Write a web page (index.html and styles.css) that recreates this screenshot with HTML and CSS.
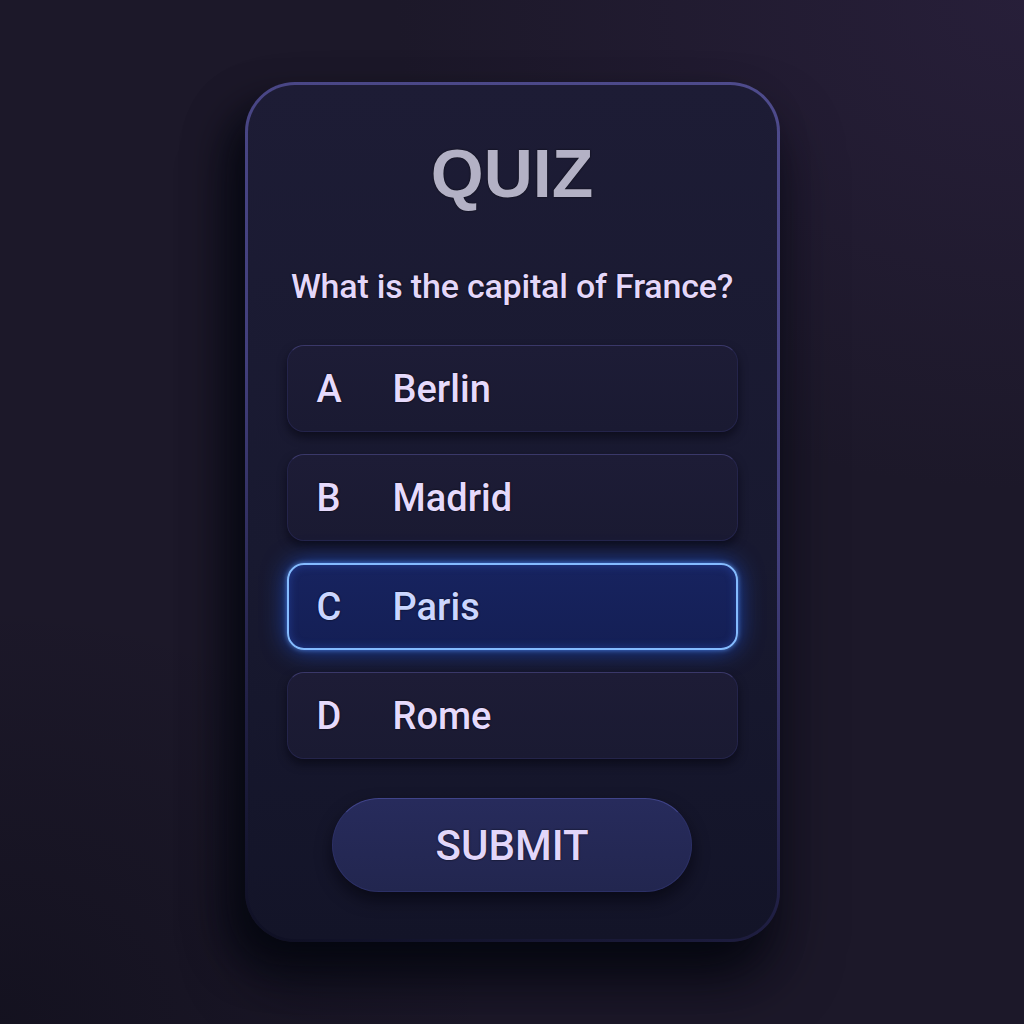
FILE: index.html
```html
<!DOCTYPE html>
<html lang="en">
<head>
<meta charset="utf-8">
<title>Quiz</title>
<link rel="stylesheet" href="styles.css">
</head>
<body>
<main class="card">
  <h1 class="title">QUIZ</h1>
  <p class="question">What is the capital of France?</p>
  <ul class="options">
    <li class="option"><span class="letter">A</span><span class="answer">Berlin</span></li>
    <li class="option"><span class="letter">B</span><span class="answer">Madrid</span></li>
    <li class="option selected"><span class="letter">C</span><span class="answer">Paris</span></li>
    <li class="option"><span class="letter">D</span><span class="answer">Rome</span></li>
  </ul>
  <button class="submit" type="button">SUBMIT</button>
</main>
</body>
</html>
```
FILE: styles.css
```css
html, body {
  margin: 0;
  padding: 0;
}
body {
  width: 1024px;
  height: 1024px;
  display: flex;
  align-items: center;
  justify-content: center;
  font-family: Roboto, "Liberation Sans", Arial, sans-serif;
  background:
    radial-gradient(ellipse 900px 700px at 100% 0%, rgba(48, 36, 70, 0.55), rgba(48, 36, 70, 0) 70%),
    radial-gradient(ellipse 700px 600px at 0% 100%, rgba(10, 10, 20, 0.45), rgba(10, 10, 20, 0) 70%),
    #1c1829;
  overflow: hidden;
}
.card {
  box-sizing: border-box;
  width: 535px;
  height: 860px;
  padding: 54px 0 47px;
  display: flex;
  flex-direction: column;
  align-items: center;
  border-radius: 50px;
  border: 3px solid transparent;
  background:
    linear-gradient(180deg, #1d1c35 0%, #181930 55%, #131428 100%) padding-box,
    linear-gradient(200deg, #4e4b8c 0%, #423f7c 45%, #23224a 75%, #0e0f22 100%) border-box;
  box-shadow: -18px 24px 40px rgba(3, 5, 14, 0.75), 0 40px 60px rgba(3, 5, 14, 0.55);
}
.title {
  margin: 0;
  font-family: "Liberation Sans", Arial, sans-serif;
  font-size: 68px;
  line-height: 68px;
  font-weight: 700;
  color: #b3b1c5;
  text-shadow: 0 0 2px rgba(0, 0, 0, 0.8);
}
.question {
  margin: 62px 0 0;
  font-size: 34px;
  line-height: 34px;
  font-weight: 500;
  color: #e4d7fa;
  letter-spacing: -0.2px;
  text-shadow: 0 0 2px rgba(0, 0, 0, 0.9);
}
.options {
  list-style: none;
  margin: 42px 0 0;
  padding: 0;
  display: flex;
  flex-direction: column;
  gap: 22px;
  width: 451px;
}
.option {
  box-sizing: border-box;
  height: 87px;
  display: flex;
  align-items: center;
  padding-left: 29px;
  border-radius: 17px;
  border: 1px solid #24244a;
  border-top-color: #3a3869;
  background: linear-gradient(180deg, #1d1c36 0%, #1a1a32 100%);
  box-shadow: 0 5px 10px rgba(3, 4, 12, 0.55);
  color: #e6dafc;
}
.letter {
  width: 76px;
  font-size: 38px;
  line-height: 38px;
  font-weight: 500;
  text-shadow: 0 0 2px rgba(0, 0, 0, 0.9);
}
.answer {
  font-size: 38px;
  line-height: 38px;
  font-weight: 500;
  text-shadow: 0 0 2px rgba(0, 0, 0, 0.9);
}
.option.selected {
  border: 2px solid #84bbff;
  padding-left: 28px;
  background: linear-gradient(180deg, #17235f 0%, #141f55 100%);
  box-shadow: 0 0 24px rgba(30, 95, 255, 0.6), 0 0 5px rgba(120, 180, 255, 0.7), inset 0 0 10px rgba(60, 110, 240, 0.35);
  color: #cbd6ff;
}
.submit {
  box-sizing: border-box;
  margin-top: 39px;
  width: 360px;
  height: 94px;
  border-radius: 47px;
  border: 1px solid #2c3066;
  border-top-color: #40448a;
  background: linear-gradient(180deg, #272b5c 0%, #22264f 100%);
  box-shadow: 0 8px 16px rgba(3, 4, 12, 0.6);
  color: #e2d6fa;
  font-family: Roboto, "Liberation Sans", Arial, sans-serif;
  font-size: 42px;
  font-weight: 500;
  text-shadow: 0 0 2px rgba(0, 0, 0, 0.9);
  padding: 0;
  cursor: pointer;
}
```
